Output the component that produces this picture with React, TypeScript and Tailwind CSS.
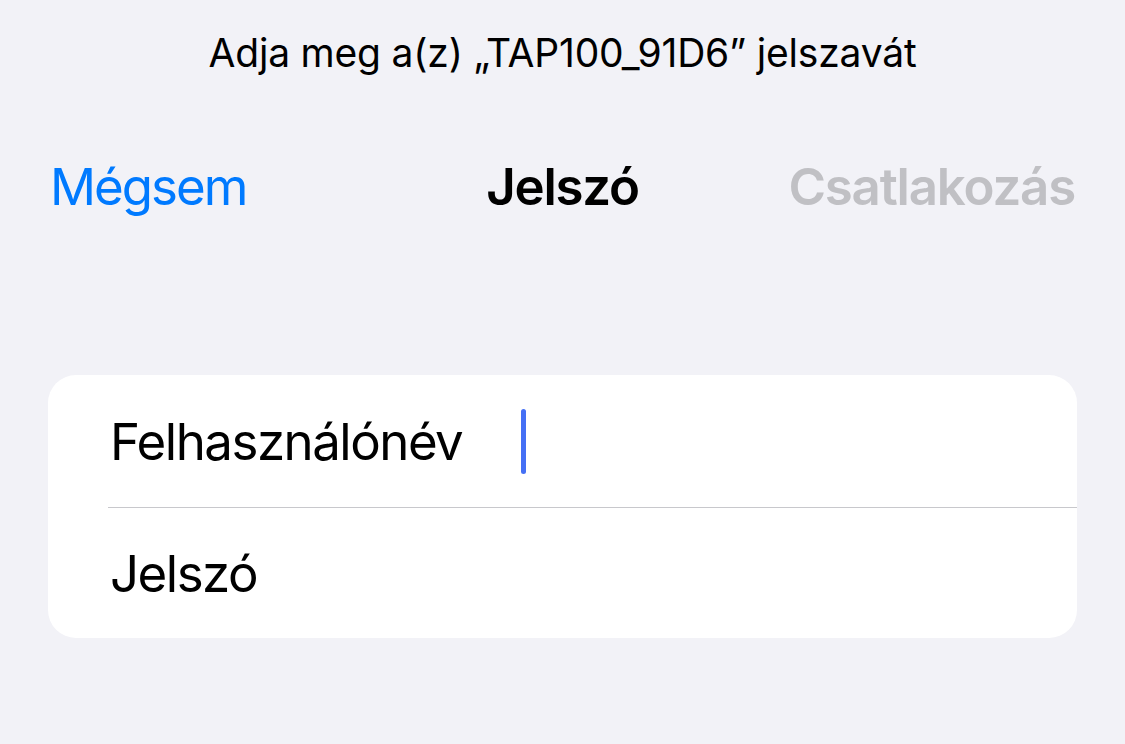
import React from "react";

export default function App() {
  return (
    <div
      className="w-[1125px] h-[744px] bg-[#f2f2f7] overflow-hidden text-black"
      style={{ fontFamily: 'Inter, "Noto Sans", sans-serif' }}
    >
      <div className="h-[104px] flex items-center justify-center">
        <span className="text-[39px] leading-none tracking-[-0.2px]">Adja meg a(z) „TAP100_91D6” jelszavát</span>
      </div>
      <div className="h-[164px] flex items-center justify-between px-[50px]">
        <span className="text-[51px] leading-none tracking-[-2px] text-[#007aff] w-[300px]">Mégsem</span>
        <span className="text-[51px] leading-none tracking-[-1.3px] font-semibold">Jelszó</span>
        <span className="text-[51px] leading-none tracking-[-1.2px] font-semibold text-[#c0c0c4] w-[300px] text-right">Csatlakozás</span>
      </div>
      <div className="mt-[107px] mx-[48px] bg-white rounded-[28px] overflow-hidden">
        <div className="h-[132px] flex items-center pl-[62px]">
          <span className="text-[51px] leading-none tracking-[-1.5px] w-[411px]">Felhasználónév</span>
          <span className="w-[5px] h-[65px] rounded-full bg-[#4570f5]" />
        </div>
        <div className="ml-[60px] h-px bg-[#c8c8cc]" />
        <div className="h-[130px] flex items-center pl-[62px]">
          <span className="text-[51px] leading-none tracking-[-1.5px]">Jelszó</span>
        </div>
      </div>
    </div>
  );
}
